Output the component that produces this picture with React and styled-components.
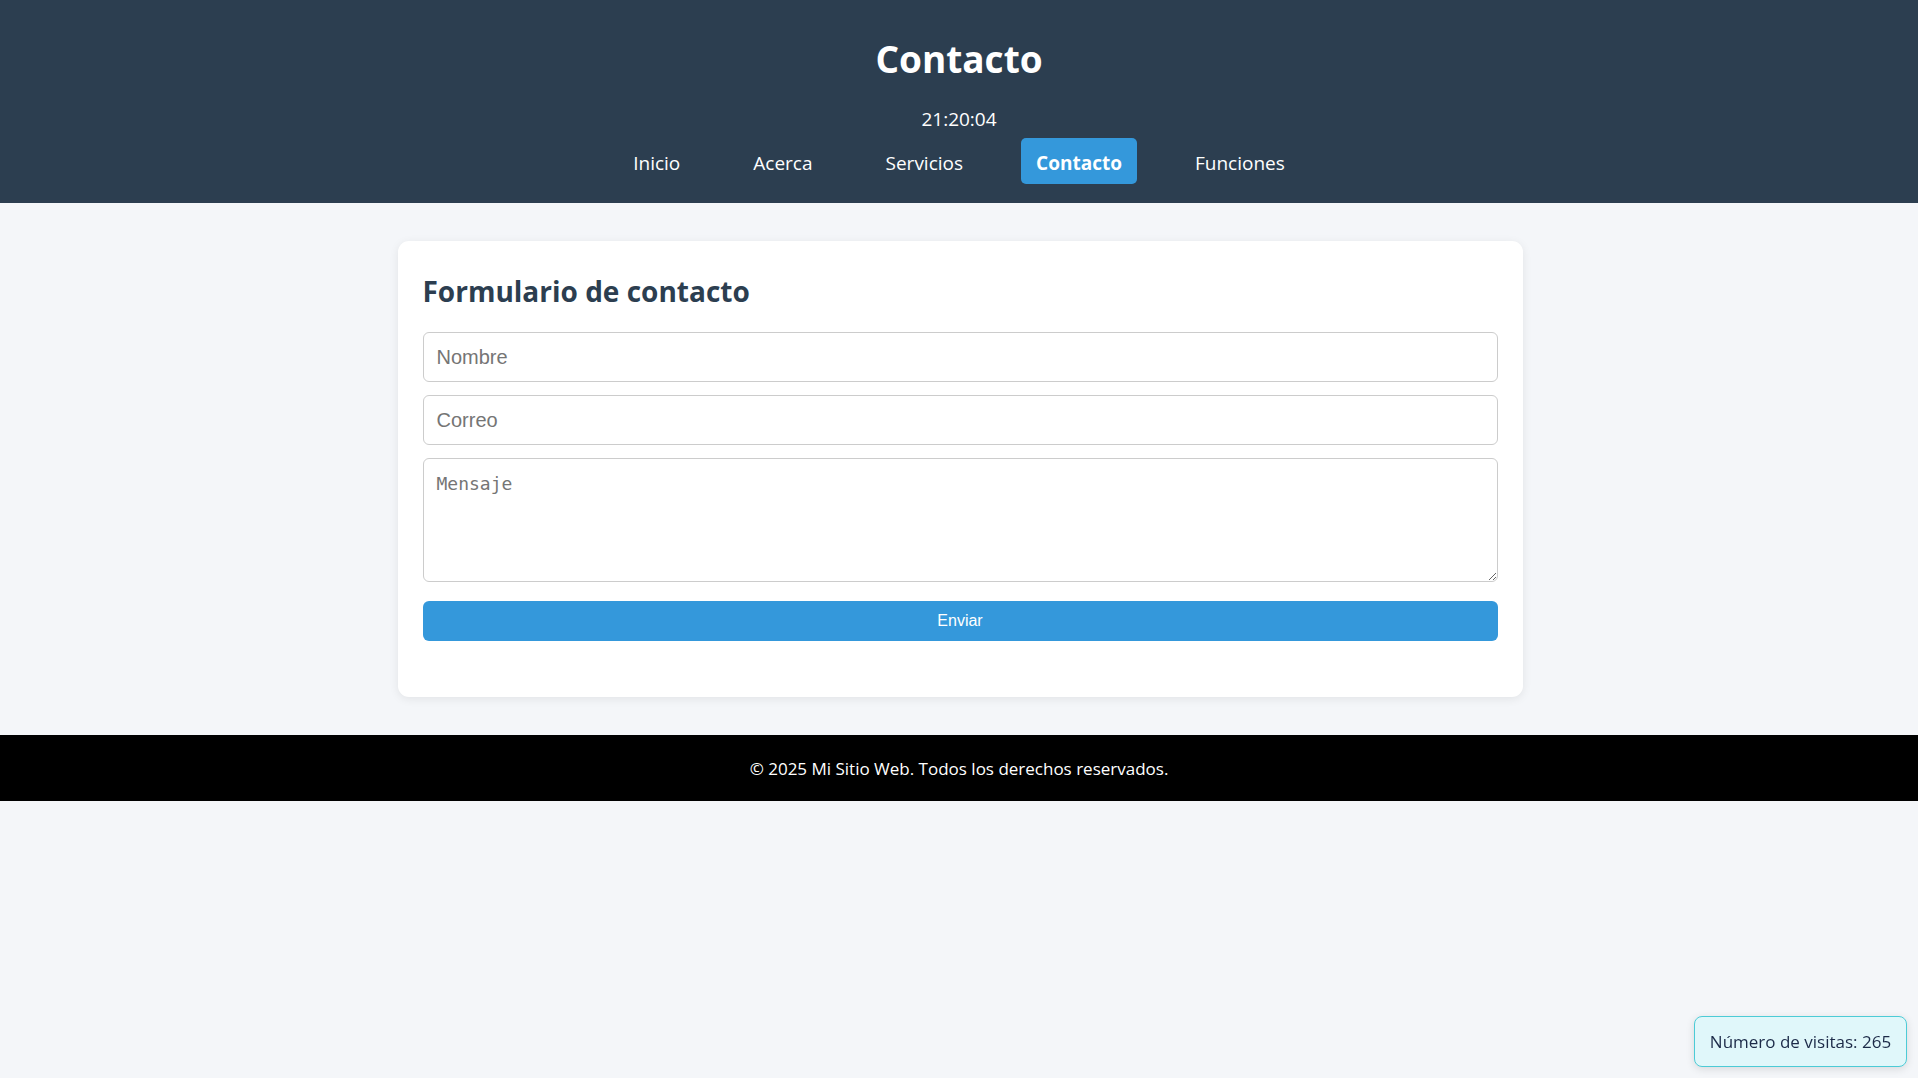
import React from "react";
import styled, { createGlobalStyle } from "styled-components";

const GlobalStyle = createGlobalStyle`
  html, body {
    margin: 0;
    padding: 0;
    background: #f4f6f9;
    font-family: "Open Sans", "Noto Sans", sans-serif;
  }
  * { box-sizing: border-box; }
`;

const Page = styled.div`
  min-height: 1078px;
  background: #f4f6f9;
`;

const Header = styled.header`
  background: #2c3e50;
  color: #ffffff;
  display: flex;
  flex-direction: column;
  align-items: center;
  padding: 36px 0 19px;
`;

const Title = styled.h1`
  margin: 0;
  font-size: 37px;
  line-height: 46px;
  font-weight: 700;
`;

const Clock = styled.div`
  margin-top: 25px;
  font-size: 19px;
  line-height: 24px;
`;

const Nav = styled.nav`
  margin-top: 7px;
  display: flex;
  gap: 43px;
  justify-content: center;
`;

const NavLink = styled.a`
  display: block;
  padding: 14px 15px 10px;
  border-radius: 5px;
  font-size: 19px;
  line-height: 22px;
  color: #ffffff;
  text-decoration: none;
  font-weight: ${(p) => (p.$active ? 700 : 400)};
  background: ${(p) => (p.$active ? "#3498db" : "transparent")};
`;

const Main = styled.main`
  padding: 38px 0 38px 2px;
  display: flex;
  justify-content: center;
`;

const Card = styled.section`
  width: 1125px;
  background: #ffffff;
  border-radius: 11px;
  box-shadow: 0 2px 10px rgba(0, 0, 0, 0.08);
  padding: 33px 25px 56px;
`;

const CardTitle = styled.h2`
  margin: 0 0 24px;
  font-size: 28px;
  line-height: 34px;
  font-weight: 700;
  color: #2c3e50;
`;

const Form = styled.form`
  display: flex;
  flex-direction: column;
`;

const Field = styled.input`
  display: block;
  width: 100%;
  height: 50px;
  margin-bottom: ${(p) => p.$gap}px;
  padding: 0 13px;
  border: 1px solid #cccccc;
  border-radius: 6px;
  background: #ffffff;
  font-family: "Liberation Sans", Arial, sans-serif;
  font-size: 20px;
  color: #333;
  &::placeholder { color: #757575; }
`;

const Message = styled.textarea`
  display: block;
  width: 100%;
  height: 124px;
  margin-bottom: 19px;
  padding: 14px 13px 11px;
  border: 1px solid #cccccc;
  border-radius: 6px;
  background: #ffffff;
  font-family: "DejaVu Sans Mono", "Liberation Mono", monospace;
  font-size: 18px;
  line-height: 22px;
  resize: vertical;
  &::placeholder { color: #757575; }
`;

const Submit = styled.button`
  display: block;
  width: 100%;
  height: 40px;
  border: none;
  border-radius: 6px;
  background: #3498db;
  color: #ffffff;
  font-family: "Liberation Sans", Arial, sans-serif;
  font-size: 16px;
  cursor: pointer;
`;

const Footer = styled.footer`
  background: #000000;
  color: #ffffff;
  height: 66px;
  display: flex;
  align-items: center;
  justify-content: center;
  font-size: 17px;
`;

const Visits = styled.div`
  position: fixed;
  right: 11px;
  bottom: 11px;
  width: 213px;
  height: 51px;
  display: flex;
  align-items: center;
  justify-content: center;
  background: #e0f7fa;
  border: 1px solid #4ccbd6;
  border-radius: 8px;
  box-shadow: 0 2px 8px rgba(0, 0, 0, 0.12);
  color: #1c2a48;
  font-size: 17px;
`;

const links = ["Inicio", "Acerca", "Servicios", "Contacto", "Funciones"];

export default function App() {
  return (
    <Page>
      <GlobalStyle />
      <Header>
        <Title>Contacto</Title>
        <Clock>21:20:04</Clock>
        <Nav>
          {links.map((l) => (
            <NavLink key={l} href="#" $active={l === "Contacto"}>
              {l}
            </NavLink>
          ))}
        </Nav>
      </Header>
      <Main>
        <Card>
          <CardTitle>Formulario de contacto</CardTitle>
          <Form onSubmit={(e) => e.preventDefault()}>
            <Field type="text" placeholder="Nombre" $gap={13} />
            <Field type="email" placeholder="Correo" $gap={13} />
            <Message placeholder="Mensaje" />
            <Submit type="submit">Enviar</Submit>
          </Form>
        </Card>
      </Main>
      <Footer>© 2025 Mi Sitio Web. Todos los derechos reservados.</Footer>
      <Visits>Número de visitas: 265</Visits>
    </Page>
  );
}
